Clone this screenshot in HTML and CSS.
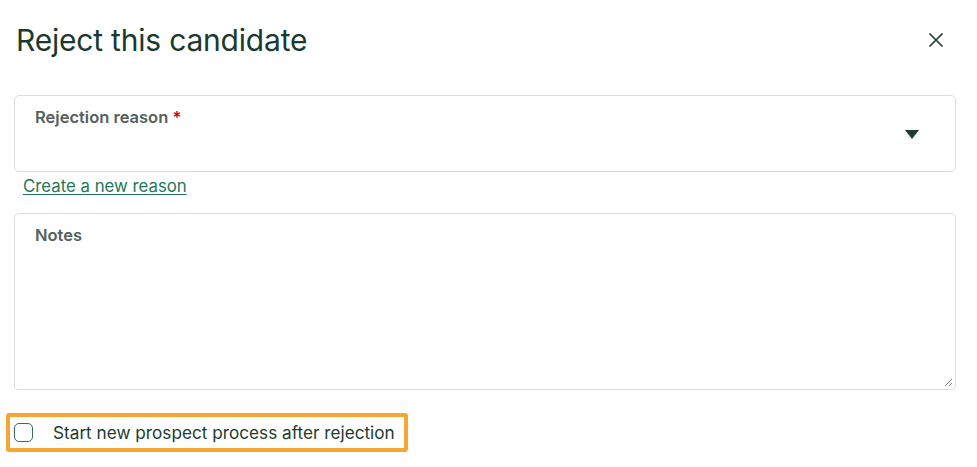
FILE: index.html
```html
<!DOCTYPE html>
<html>
<head>
<meta charset="utf-8">
<link rel="stylesheet" href="styles.css">
</head>
<body>
<div class="dialog">
  <div class="header">
    <h1 class="title">Reject this candidate</h1>
    <button class="close" aria-label="Close">
      <svg width="16" height="16" viewBox="0 0 16 16"><path d="M1.5 1.5 L14.5 14.5 M14.5 1.5 L1.5 14.5" stroke="#1d3b31" stroke-width="1.6" fill="none"/></svg>
    </button>
  </div>
  <div class="field select-field">
    <div class="label">Rejection reason <span class="req">*</span></div>
    <svg class="caret" width="14" height="9" viewBox="0 0 14 9"><path d="M0 0 H14 L7 9 Z" fill="#1d3b31"/></svg>
  </div>
  <a class="link" href="#">Create a new reason</a>
  <div class="field notes-field">
    <div class="label">Notes</div>
    <svg class="grip" width="10" height="10" viewBox="0 0 10 10"><path d="M9 2 L2 9 M9 6 L6 9" stroke="#888" stroke-width="1" fill="none"/></svg>
  </div>
  <label class="check-row">
    <span class="box"></span>
    <span class="check-text">Start new prospect process after rejection</span>
  </label>
</div>
</body>
</html>
```
FILE: styles.css
```css
html, body {
  margin: 0;
  padding: 0;
  background: #ffffff;
}
body {
  font-family: "Inter", "Liberation Sans", sans-serif;
  color: #1d3b31;
}
.dialog {
  padding: 0 21px 0 14px;
  display: flex;
  flex-direction: column;
}
.header {
  display: flex;
  justify-content: space-between;
  align-items: center;
  height: 95px;
  padding-left: 2px;
  padding-bottom: 15px;
  box-sizing: border-box;
}
.title {
  margin: 0;
  font-size: 30px;
  font-weight: 400;
  letter-spacing: -0.2px;
  color: #1a3a2f;
}
.close {
  background: none;
  border: 0;
  padding: 0;
  margin-right: 12px;
  margin-top: -1px;
  width: 16px;
  height: 16px;
  display: flex;
}
.field {
  border: 1px solid #dcdcdc;
  border-radius: 5px;
  box-sizing: border-box;
  position: relative;
  padding: 11px 20px;
}
.select-field {
  height: 77px;
}
.notes-field {
  height: 177px;
  margin-top: 17px;
}
.label {
  font-size: 16.5px;
  font-weight: 600;
  color: #52615b;
}
.req {
  color: #d0021b;
}
.caret {
  position: absolute;
  right: 36px;
  top: 34px;
}
.grip {
  position: absolute;
  right: 2px;
  bottom: 2px;
}
.link {
  margin-left: 9px;
  margin-top: 4px;
  font-size: 16.8px;
  color: #23775a;
  text-decoration: underline;
  text-underline-offset: 2px;
  align-self: flex-start;
  line-height: 20px;
}
.check-row {
  margin-top: 23px;
  margin-left: -8px;
  align-self: flex-start;
  display: flex;
  align-items: center;
  gap: 20px;
  border: 4px solid #f5a633;
  border-radius: 3px;
  padding: 4px 9px 4px 4px;
  height: 39px;
  box-sizing: border-box;
}
.box {
  width: 19px;
  height: 19px;
  box-sizing: border-box;
  border: 1.5px solid #3d6b5a;
  border-radius: 5px;
}
.check-text {
  font-size: 17.2px;
  color: #1d3b31;
}
```
